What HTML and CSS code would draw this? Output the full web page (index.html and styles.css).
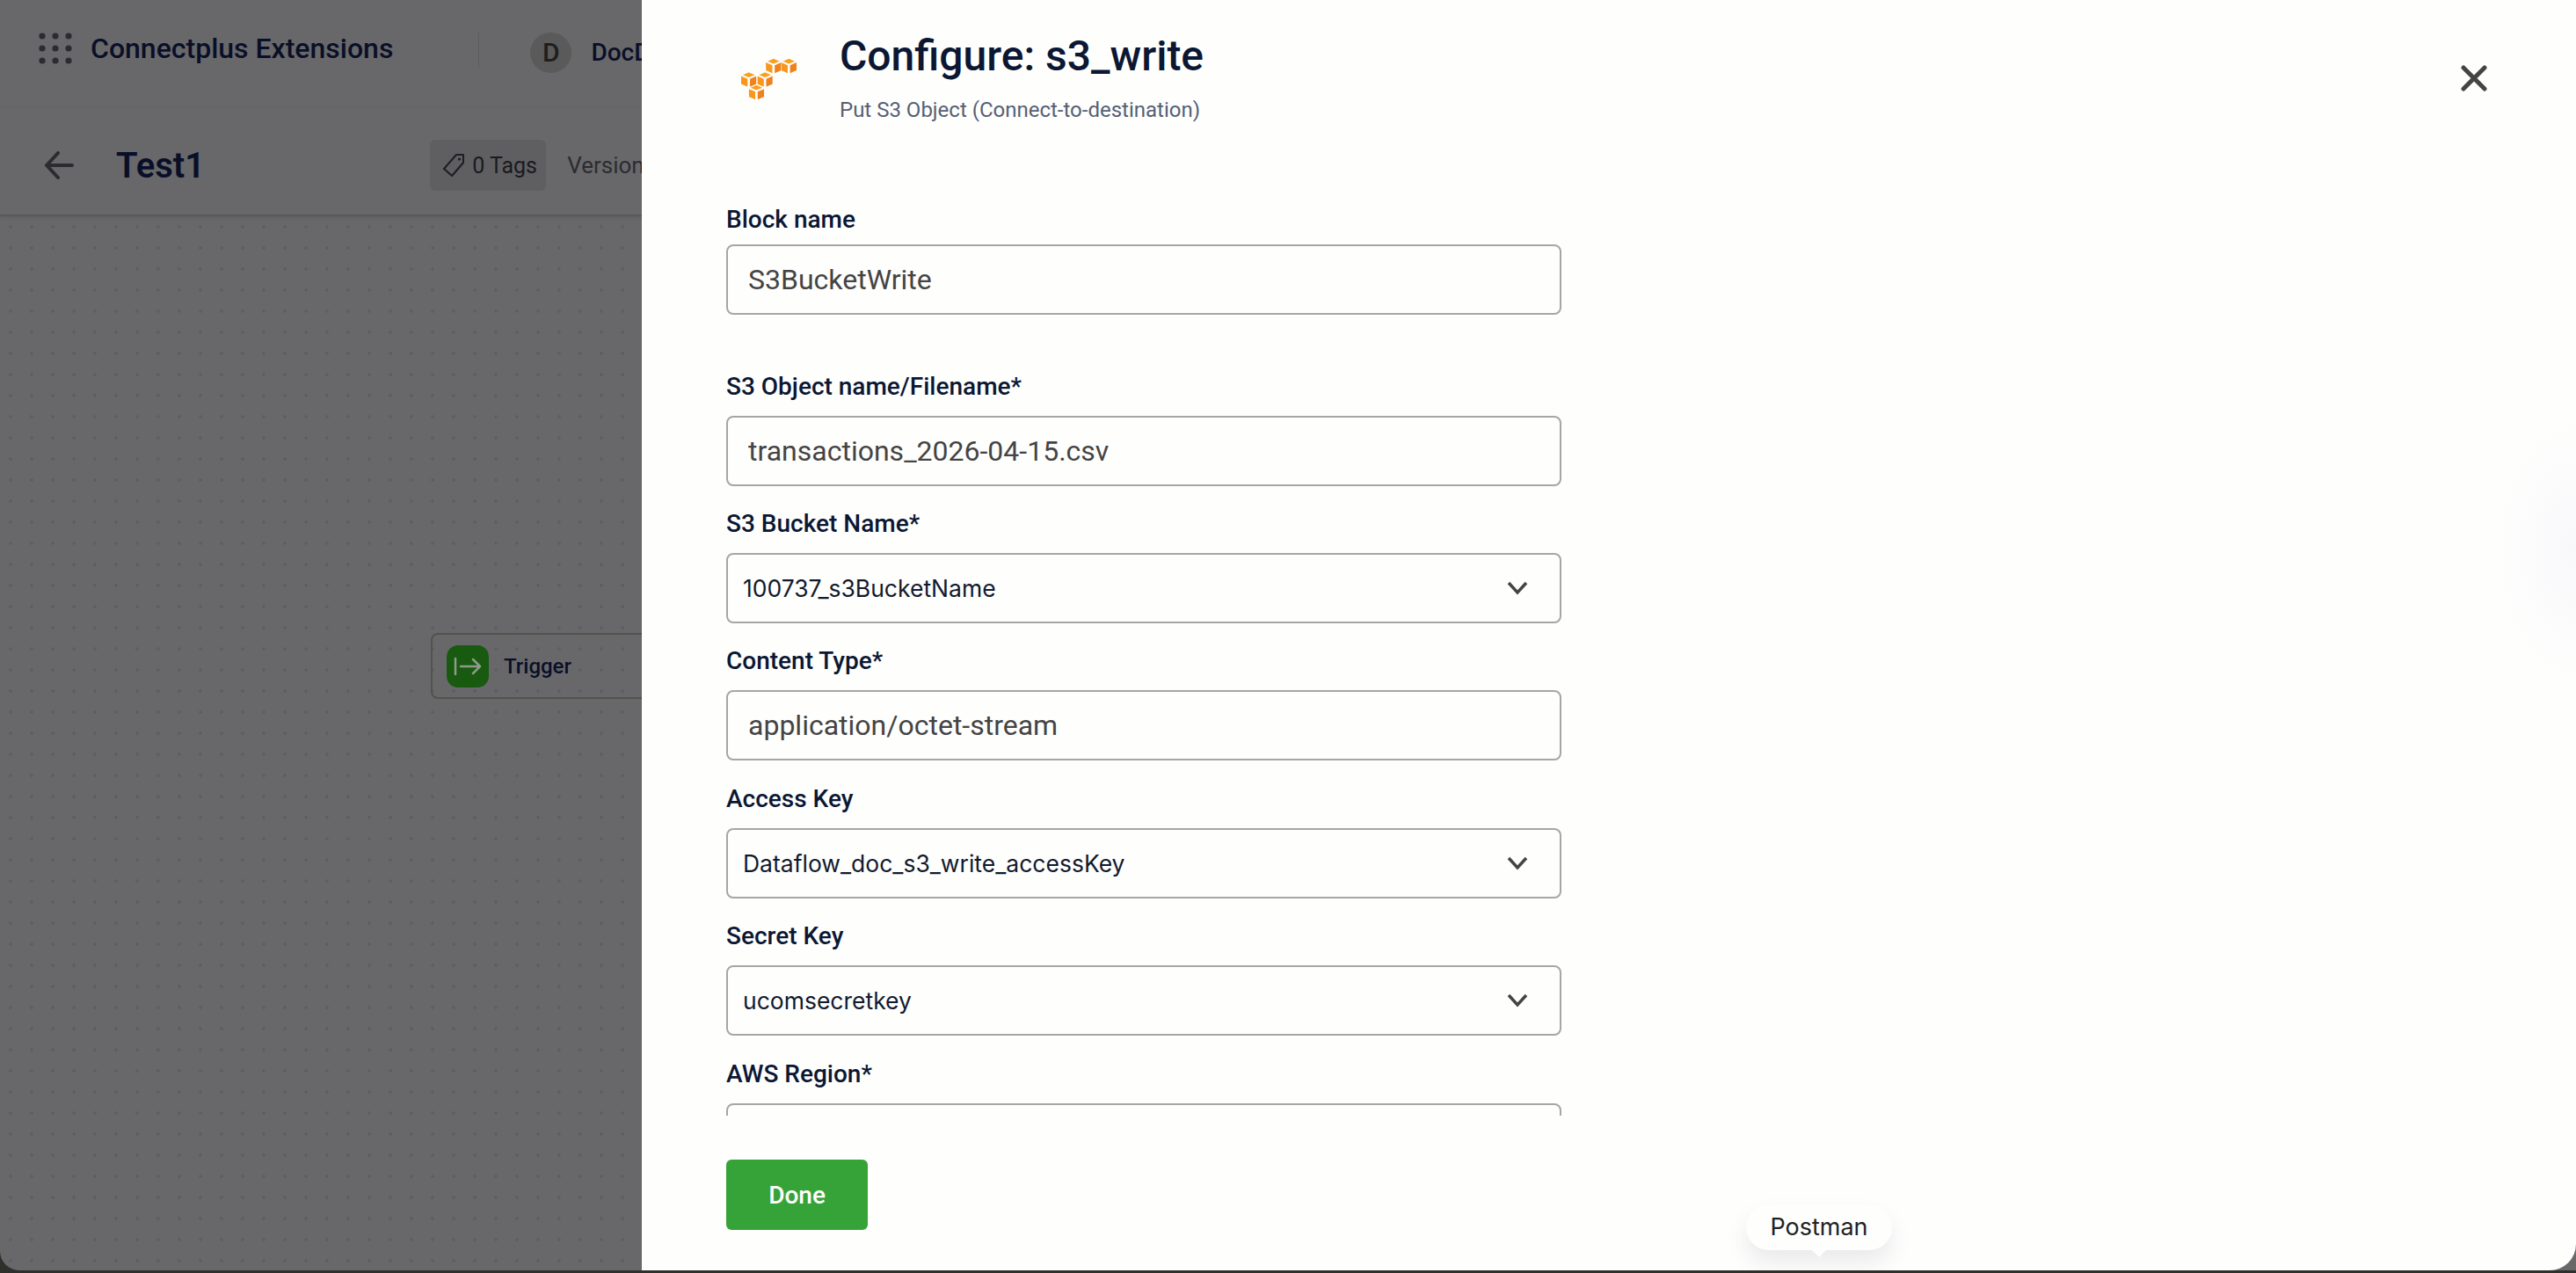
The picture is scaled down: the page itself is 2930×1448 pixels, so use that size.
FILE: index.html
```html
<!DOCTYPE html>
<html lang="en">
<head>
    <meta charset="UTF-8">
    <title>Configure: s3_write</title>
    <link rel="stylesheet" href="styles.css">
</head>
<body>

<svg class="defs" width="0" height="0">
    <symbol id="cube" viewBox="0 0 18 17">
        <path d="M9 0l7 3-7 3-7-3z" fill="#f9a11f"/>
        <path d="M0 4.500l7.600 3.200V17L0 13.600z" fill="#f7981d"/>
        <path d="M18 4.500l-7.600 3.200V17l7.600-3.400z" fill="#f0811f"/>
    </symbol>
</svg>

<div class="app">
    <header class="topbar">
        <svg class="apps-icon" width="38" height="36" viewBox="0 0 38 36">
            <g fill="#2c2c30">
                <circle cx="4" cy="4" r="3.600"/><circle cx="19" cy="4" r="3.600"/><circle cx="34" cy="4" r="3.600"/>
                <circle cx="4" cy="18" r="3.600"/><circle cx="19" cy="18" r="3.600"/><circle cx="34" cy="18" r="3.600"/>
                <circle cx="4" cy="32" r="3.600"/><circle cx="19" cy="32" r="3.600"/><circle cx="34" cy="32" r="3.600"/>
            </g>
        </svg>
        <span class="app-name">Connectplus Extensions</span>
        <span class="divider"></span>
        <span class="avatar">D</span>
        <span class="org-name">DocD</span>
    </header>

    <div class="subbar">
        <svg class="back-icon" width="34" height="32" viewBox="0 0 34 32">
            <path d="M32 16H3M16 2L3 16l13 14" fill="none" stroke="#2c2c30" stroke-width="4" stroke-linecap="round" stroke-linejoin="round"/>
        </svg>
        <h1 class="flow-name">Test1</h1>
        <div class="tags">
            <svg width="26" height="28" viewBox="0 0 26 28">
                <path d="M16 2h8v9L11 26 2 18z" fill="none" stroke="#1d1d22" stroke-width="2" stroke-linejoin="round"/>
                <circle cx="19.500" cy="7" r="1.600" fill="#1d1d22"/>
            </svg>
            <span>0 Tags</span>
        </div>
        <span class="version">Version</span>
    </div>

    <div class="canvas">
        <div class="node">
            <span class="node-icon">
                <svg width="32" height="22" viewBox="0 0 32 22">
                    <path d="M2 2v18M8 11h22M22 3l8 8-8 8" fill="none" stroke="#8f9a8c" stroke-width="2.500" stroke-linecap="round" stroke-linejoin="round"/>
                </svg>
            </span>
            <span class="node-label">Trigger</span>
        </div>
    </div>
</div>

<aside class="drawer">
    <div class="drawer-head">
        <svg class="aws-logo" width="64" height="48" viewBox="0 0 66 48">
            <use href="#cube" x="30" y="0" width="18" height="17"/>
            <use href="#cube" x="48" y="0" width="18" height="17"/>
            <use href="#cube" x="1" y="16" width="18" height="17"/>
            <use href="#cube" x="20" y="16" width="18" height="17"/>
            <use href="#cube" x="10" y="31" width="18" height="17"/>
        </svg>
        <div>
            <h2 class="drawer-title">Configure: s3_write</h2>
            <p class="drawer-sub">Put S3 Object (Connect-to-destination)</p>
        </div>
    </div>

    <svg class="close-icon" width="30" height="30" viewBox="0 0 30 30">
        <path d="M3 3l24 24M27 3L3 27" fill="none" stroke="#444" stroke-width="5" stroke-linecap="round"/>
    </svg>

    <form class="drawer-form">
        <div class="field field-first">
            <label>Block name</label>
            <input class="text-input" type="text" value="S3BucketWrite">
        </div>
        <div class="field">
            <label>S3 Object name/Filename*</label>
            <input class="text-input" type="text" value="transactions_2026-04-15.csv">
        </div>
        <div class="field">
            <label>S3 Bucket Name*</label>
            <div class="select-box">
                <span>100737_s3BucketName</span>
                <svg width="24" height="16" viewBox="0 0 24 16"><path d="M2 2l10 11L22 2" fill="none" stroke="#444" stroke-width="3.500"/></svg>
            </div>
        </div>
        <div class="field">
            <label>Content Type*</label>
            <input class="text-input" type="text" value="application/octet-stream">
        </div>
        <div class="field">
            <label>Access Key</label>
            <div class="select-box">
                <span>Dataflow_doc_s3_write_accessKey</span>
                <svg width="24" height="16" viewBox="0 0 24 16"><path d="M2 2l10 11L22 2" fill="none" stroke="#444" stroke-width="3.500"/></svg>
            </div>
        </div>
        <div class="field">
            <label>Secret Key</label>
            <div class="select-box">
                <span>ucomsecretkey</span>
                <svg width="24" height="16" viewBox="0 0 24 16"><path d="M2 2l10 11L22 2" fill="none" stroke="#444" stroke-width="3.500"/></svg>
            </div>
        </div>
        <div class="field">
            <label>AWS Region*</label>
            <div class="select-box"></div>
        </div>
    </form>

    <div class="drawer-foot">
        <button class="done-btn" type="button">Done</button>
    </div>

    <div class="tooltip">Postman</div>
</aside>

</body>
</html>
```

FILE: styles.css
```css
* {
    margin: 0;
    padding: 0;
    box-sizing: border-box;
}

html, body {
    height: 100%;
    overflow: hidden;
}

body {
    position: relative;
    background: #2f2f2b;
    font-family: Roboto, "Liberation Sans", sans-serif;
}

.defs {
    position: absolute;
}

.app {
    height: 1445px;
    display: flex;
    flex-direction: column;
    background: #68686a;
    border-bottom-left-radius: 22px;
    color: #0a0f28;
}

.topbar {
    height: 122px;
    padding: 37px 0 0 44px;
    display: flex;
    align-items: flex-start;
    border-bottom: 1px solid #626262;
}

.apps-icon {
    flex: none;
}

.app-name {
    margin-left: 21px;
    font-size: 32px;
    font-weight: 500;
    line-height: 36px;
}

.divider {
    width: 1px;
    height: 40px;
    margin-left: 97px;
    background: #5c5c5c;
}

.avatar {
    width: 47px;
    height: 46px;
    margin-left: 58px;
    border-radius: 50%;
    background: #5a5a5a;
    color: #1e1e1e;
    font-size: 30px;
    font-weight: 500;
    line-height: 46px;
    text-align: center;
}

.org-name {
    margin-left: 22px;
    font-size: 28px;
    font-weight: 500;
    line-height: 46px;
}

.subbar {
    height: 124px;
    padding: 10px 0 0 50px;
    display: flex;
    align-items: center;
    border-bottom: 2px solid #595959;
    box-shadow: 0 2px 4px rgba(0, 0, 0, 0.08);
}

.flow-name {
    margin-left: 48px;
    font-size: 40px;
    font-weight: 600;
}

.tags {
    width: 132px;
    height: 58px;
    margin-left: 256px;
    padding-left: 14px;
    display: flex;
    align-items: center;
    gap: 8px;
    background: #5f5f61;
    border-radius: 6px;
    font-size: 25px;
    color: #1a1a20;
}

.version {
    margin-left: 24px;
    font-size: 26px;
    color: #2c2c30;
}

.canvas {
    flex: 1;
    position: relative;
    background-image: radial-gradient(circle, #5d5d64 1.5px, transparent 2px);
    background-size: 24px 24px;
}

.node {
    position: absolute;
    left: 490px;
    top: 474px;
    width: 300px;
    height: 75px;
    padding-left: 16px;
    display: flex;
    align-items: center;
    gap: 17px;
    border: 2px solid #52524c;
    border-radius: 8px;
}

.node-icon {
    width: 48px;
    height: 48px;
    display: flex;
    align-items: center;
    justify-content: center;
    background: #175a10;
    border-radius: 13px;
}

.node-label {
    font-size: 24px;
    font-weight: 500;
}

/* config panel slides over the flow */
.drawer {
    position: absolute;
    top: 0;
    left: 730px;
    width: 2200px;
    height: 1445px;
    display: flex;
    flex-direction: column;
    background: radial-gradient(ellipse 90px 150px at 100% 625px, #f8f8fb, transparent) #fefefd;
    border-bottom-right-radius: 30px;
}

.drawer-head {
    height: 230px;
    padding: 36px 0 0 112px;
    display: flex;
    gap: 49px;
}

.aws-logo {
    margin-top: 30px;
    flex: none;
}

.drawer-title {
    font-size: 48px;
    font-weight: 500;
    line-height: 56px;
    color: #0b1733;
}

.drawer-sub {
    margin-top: 18px;
    font-size: 24px;
    line-height: 30px;
    color: #566075;
}

.close-icon {
    position: absolute;
    top: 74px;
    right: 101px;
}

.drawer-form {
    height: 1039px;
    padding-left: 96px;
    overflow: hidden;
}

.field {
    width: 950px;
    height: 156.4px;
}

.field-first {
    height: 189.6px;
}

.field label {
    display: block;
    height: 40px;
    margin-bottom: 13px;
    font-size: 28px;
    font-weight: 500;
    line-height: 40px;
    color: #0b1733;
}

.field-first label {
    margin-bottom: 8px;
}

.text-input,
.select-box {
    width: 100%;
    height: 80px;
    border: 2px solid #a6a6a8;
    border-radius: 8px;
    background: transparent;
}

.text-input {
    padding-left: 23px;
    font-family: Roboto, "Liberation Sans", sans-serif;
    font-size: 32px;
    color: #444;
    outline: none;
}

.select-box {
    padding: 0 36px 0 17px;
    display: flex;
    align-items: center;
    justify-content: space-between;
    font-family: Inter, "Liberation Sans", sans-serif;
    font-size: 26.5px;
    color: #111a2e;
}

.drawer-foot {
    padding: 50px 0 0 96px;
}

.done-btn {
    width: 161px;
    height: 80px;
    border: none;
    border-radius: 6px;
    background: #36a338;
    color: white;
    font-family: Roboto, "Liberation Sans", sans-serif;
    font-size: 28px;
    font-weight: 500;
}

.tooltip {
    position: absolute;
    left: 1256px;
    top: 1370px;
    width: 166px;
    height: 52px;
    border-radius: 26px;
    background: #fefefd;
    box-shadow: 0 14px 24px rgba(60, 60, 90, 0.1);
    font-family: Inter, "Liberation Sans", sans-serif;
    font-size: 27px;
    line-height: 52px;
    text-align: center;
    color: #222;
}

.tooltip::after {
    content: "";
    position: absolute;
    left: 73px;
    bottom: -8px;
    border-left: 10px solid transparent;
    border-right: 10px solid transparent;
    border-top: 10px solid #fefefd;
}
```
